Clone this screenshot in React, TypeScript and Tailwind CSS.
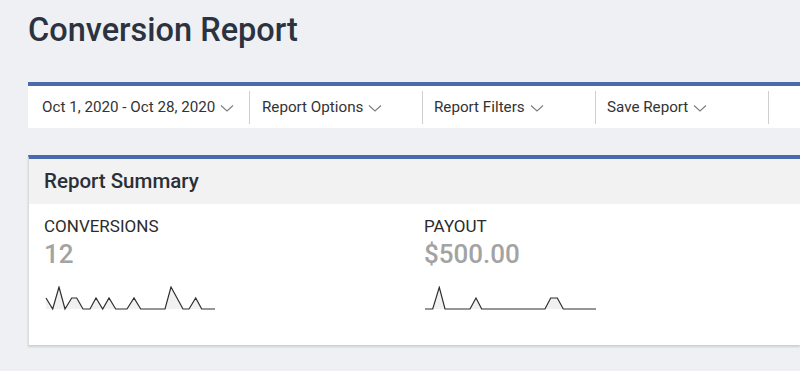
import React from 'react';

const Chevron: React.FC = () => (
  <svg width="14" height="8" viewBox="0 0 14 8" fill="none" className="ml-[5px] mt-[1px]">
    <path d="M1 1.5l6 5.5 6-5.5" stroke="#7d7d7d" strokeWidth="1.1" />
  </svg>
);

type Pt = [number, number];

const Sparkline: React.FC<{ points: Pt[] }> = ({ points }) => {
  const line = points.map(([x, y]) => `${x},${y}`).join(' ');
  const first = points[0];
  const last = points[points.length - 1];
  const area = `${first[0]},23 ${line} ${last[0]},23`;
  return (
    <svg width="174" height="25" viewBox="0 0 174 25" className="block">
      <polygon points={area} fill="#f1f1f1" />
      <polyline points={line} fill="none" stroke="#2f2f2f" strokeWidth="1.2" strokeLinejoin="miter" />
    </svg>
  );
};

const conversionsData: Pt[] = [
  [2, 12], [8.7, 23], [15, 1], [21, 23], [27.7, 12], [32.7, 12], [39, 23], [46, 23],
  [52, 12], [58.7, 23], [65, 12], [71.7, 23], [83, 23], [90, 12], [96.7, 23], [121, 23],
  [127, 1], [139, 23], [145, 23], [151.7, 12], [157.7, 23], [171, 23],
];

const payoutData: Pt[] = [
  [1, 23], [8.7, 23], [15.3, 1.3], [21, 23], [46, 23], [52, 12], [57.7, 23], [121, 23],
  [126.7, 12], [133.3, 12], [139.3, 23], [172, 23],
];

const menus = [
  { label: 'Oct 1, 2020 - Oct 28, 2020', width: 'w-[222px] pl-[14px]' },
  { label: 'Report Options', width: 'w-[173px] pl-[12px]' },
  { label: 'Report Filters', width: 'w-[173px] pl-[11px]' },
  { label: 'Save Report', width: 'w-[173px] pl-[11px]' },
];

const App: React.FC = () => {
  return (
    <main className="min-h-screen w-full overflow-hidden bg-[#eef0f3] pl-[28px] pt-[10px] font-[Roboto,'Liberation_Sans',sans-serif]">
      <h1 className="text-[32.5px] leading-[40px] font-medium text-[#2c3340]">Conversion Report</h1>

      {/* toolbar */}
      <div className="mt-[32px] border-t-4 border-[#4b6aae] bg-white h-[46px] flex items-center">
        {menus.map((m) => (
          <div key={m.label} className={`${m.width} h-[33px] flex items-center border-r border-[#cfcfcf] text-[15.2px] text-[#333]`}>
            <span>{m.label}</span>
            <Chevron />
          </div>
        ))}
      </div>

      {/* summary card */}
      <section className="mt-[27px] border-t-4 border-[#4b6aae] border-l border-l-[#dcdcdc] bg-white shadow-[0_2px_2px_rgba(0,0,0,0.14)]">
        <div className="h-[45px] bg-[#f2f2f2] flex items-center pl-[15px]">
          <h2 className="text-[20.5px] font-medium text-[#2a2f38]">Report Summary</h2>
        </div>
        <div className="h-[141px] flex pl-[15px] pt-[12px]">
          <div className="w-[380px]">
            <div className="text-[17px] leading-[20px] text-[#2b2b2b]">CONVERSIONS</div>
            <div className="mt-[3px] text-[26px] leading-[30px] font-medium text-[#a3a3a3]">12</div>
            <div className="mt-[17px]">
              <Sparkline points={conversionsData} />
            </div>
          </div>
          <div>
            <div className="text-[17px] leading-[20px] text-[#2b2b2b]">PAYOUT</div>
            <div className="mt-[3px] text-[26px] leading-[30px] font-medium text-[#a3a3a3]">$500.00</div>
            <div className="mt-[17px]">
              <Sparkline points={payoutData} />
            </div>
          </div>
        </div>
      </section>
    </main>
  );
};

export default App;
